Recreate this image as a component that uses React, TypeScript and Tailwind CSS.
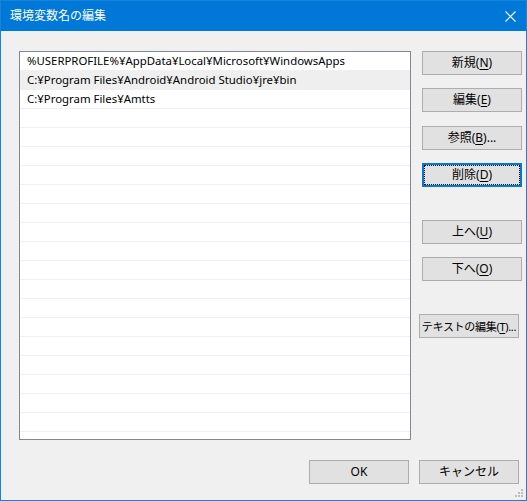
import React from "react";

const font = { fontFamily: '"Noto Sans", "Noto Sans CJK JP", sans-serif' };

const paths = [
  "%USERPROFILE%¥AppData¥Local¥Microsoft¥WindowsApps",
  "C:¥Program Files¥Android¥Android Studio¥jre¥bin",
  "C:¥Program Files¥Amtts",
];

const Mn = ({ k }: { k: string }) => (
  <>
    (<span className="underline underline-offset-2">{k}</span>)
  </>
);

const Btn = ({
  children,
  focused,
  className = "",
}: {
  children: React.ReactNode;
  focused?: boolean;
  className?: string;
}) => (
  <button
    className={
      "h-[24px] w-[100px] bg-[#e1e1e1] leading-none text-black whitespace-nowrap flex items-center justify-center " +
      (focused ? "border-2 border-[#0078d7] " : "border border-[#adadad] ") +
      className
    }
  >
    {focused ? (
      <span className="w-full h-full border border-dotted border-black flex items-center justify-center">
        {children}
      </span>
    ) : (
      children
    )}
  </button>
);

export default function App() {
  const rows = Array.from({ length: 21 }, (_, i) => paths[i] ?? "");
  return (
    <div
      className="relative w-[527px] h-[501px] border border-[#1a82d9] bg-[#f0f0f0] flex flex-col"
      style={font}
    >
      <div className="h-[30px] bg-[#0078d7] flex items-center justify-between pl-[9px] pr-[9px] text-white text-[12px]">
        <span>環境変数名の編集</span>
        <svg width="11" height="11" viewBox="0 0 11 11" className="mr-[1px]">
          <path d="M0.5 0.5 L10.5 10.5 M10.5 0.5 L0.5 10.5" stroke="white" strokeWidth="1.1" />
        </svg>
      </div>

      <div className="flex-1 flex flex-col pl-[18px] pt-[20px] pr-[4px] pb-[16px]">
        <div className="flex gap-[11px]">
          {/* path list */}
          <div className="w-[392px] h-[389px] border border-[#828790] bg-white overflow-hidden">
            {rows.map((p, i) => (
              <div
                key={i}
                className={
                  "h-[19px] border-b border-[#f0f0f0] pl-[7px] flex items-center text-[11.4px] text-black whitespace-nowrap " +
                  (i === 1 ? "bg-[#efefef]" : "")
                }
              >
                {p}
              </div>
            ))}
          </div>

          {/* action buttons */}
          <div className="flex flex-col">
            <Btn className="text-[12px]">
              新規<Mn k="N" />
            </Btn>
            <Btn className="mt-[13px] text-[12px]">
              編集<Mn k="E" />
            </Btn>
            <Btn className="mt-[14px] text-[12px]">
              参照<Mn k="B" />...
            </Btn>
            <Btn focused className="mt-[13px] text-[12px]">
              削除<Mn k="D" />
            </Btn>
            <Btn className="mt-[33px] text-[12px]">
              上へ<Mn k="U" />
            </Btn>
            <Btn className="mt-[13px] text-[12px]">
              下へ<Mn k="O" />
            </Btn>
            <Btn className="mt-[33px] -ml-[3px] text-[11px] tracking-[-0.3px]">
              テキストの編集<Mn k="T" />...
            </Btn>
          </div>
        </div>

        <div className="flex justify-end gap-[10px] mt-[20px] pr-[3px]">
          <Btn className="w-[99px] text-[12px]">OK</Btn>
          <Btn className="w-[99px] text-[12px]">キャンセル</Btn>
        </div>
      </div>

      {/* size grip */}
      <svg className="absolute right-[2px] bottom-[2px]" width="9" height="9" viewBox="0 0 9 9">
        <rect x="6" y="0" width="2" height="2" fill="#bdbdbd" />
        <rect x="3" y="3" width="2" height="2" fill="#bdbdbd" />
        <rect x="6" y="3" width="2" height="2" fill="#bdbdbd" />
        <rect x="0" y="6" width="2" height="2" fill="#bdbdbd" />
        <rect x="3" y="6" width="2" height="2" fill="#bdbdbd" />
        <rect x="6" y="6" width="2" height="2" fill="#bdbdbd" />
      </svg>
    </div>
  );
}
